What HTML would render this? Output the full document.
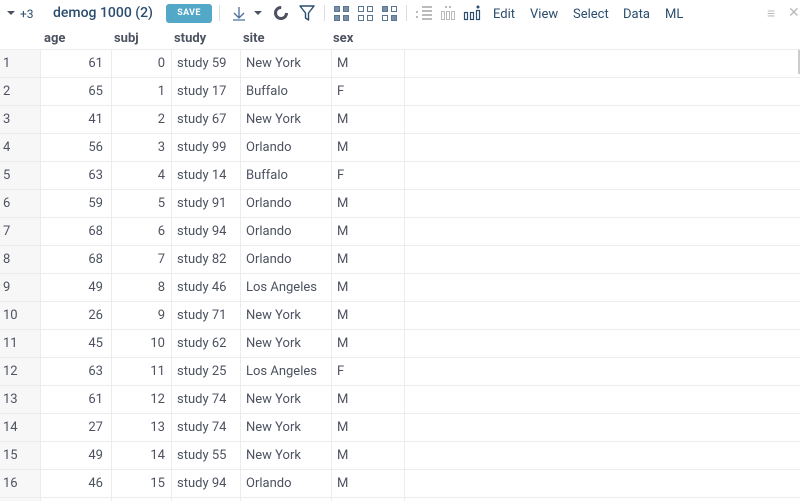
<!DOCTYPE html>
<html style="width:800px;height:501px;overflow:hidden"><head><meta charset="utf-8"><style>
*{margin:0;padding:0;box-sizing:border-box}
body{width:800px;height:501px;overflow:hidden;background:#fff;font-family:"Roboto","Liberation Sans",sans-serif;color:#4d5261;position:relative;font-size:13px}
.tb{position:absolute;top:0;left:0;width:800px;height:27px}
.t{position:absolute;top:6px;font-size:13px;color:#2a4d6e}
.save{position:absolute;left:166px;top:4px;width:46px;height:19px;background:#53a8c8;border-radius:3px;color:#fff;font-size:9px;font-weight:bold;text-align:center;line-height:19px;letter-spacing:.3px}
.sep{position:absolute;top:5px;width:1px;height:16px;background:#ddd}
.g{position:absolute;top:6px;width:16px;height:16px}
.g i{position:absolute;width:6px;height:6px;border:1px solid #5a7590}
.hdr{position:absolute;top:28px;height:22px;font-weight:bold;font-size:13px;color:#4d5261;line-height:22px}
.row{position:absolute;left:0;width:800px;height:28px;border-top:1px solid #ececec;overflow:hidden}
.c{position:absolute;top:0;height:27px;line-height:27px;border-left:1px solid #ececec;padding:0 5px;white-space:nowrap;font-size:13px}
.rn{position:absolute;left:0;top:0;width:40px;height:27px;background:#f7f7f7;line-height:27px;padding-left:3px}
</style></head><body>
<div class="tb">
<svg style="position:absolute;left:7px;top:11px" width="8" height="5"><path d="M0 0L8 0L4 4Z" fill="#4d5261"/></svg>
<span class="t" style="left:20px;font-size:12px;top:7px">+3</span>
<span class="t" style="left:53px;font-size:14px;top:5px;font-weight:500">demog 1000 (2)</span>
<div class="save">SAVE</div>
<div class="sep" style="left:219px"></div>
<svg style="position:absolute;left:232px;top:6px" width="14" height="15"><path d="M7 1V11M2 7L7 12L12 7M1 14H13" stroke="#4a6fa0" stroke-width="1.3" fill="none"/></svg>
<svg style="position:absolute;left:254px;top:11px" width="8" height="5"><path d="M0 0L8 0L4 4Z" fill="#4d5261"/></svg>
<svg style="position:absolute;left:273px;top:5px" width="16" height="16"><circle cx="8" cy="8" r="5.5" stroke="#4d5261" stroke-width="3" fill="none" stroke-dasharray="26 9"/></svg>
<svg style="position:absolute;left:299px;top:5px" width="16" height="17"><path d="M1 1H15L9.5 8V15L6.5 13V8Z" stroke="#2a4d6e" stroke-width="1.4" fill="none" stroke-linejoin="round"/></svg>
<div class="sep" style="left:324px"></div>
<div class="g" style="left:334px"><i style="left:0;top:0;background:#7a90a8"></i><i style="left:9px;top:0;background:#7a90a8"></i><i style="left:0;top:9px;background:#7a90a8"></i><i style="left:9px;top:9px;background:#7a90a8"></i></div>
<div class="g" style="left:358px"><i style="left:0;top:0"></i><i style="left:9px;top:0"></i><i style="left:0;top:9px"></i><i style="left:9px;top:9px"></i></div>
<div class="g" style="left:382px"><i style="left:0;top:0;background:#7a90a8"></i><i style="left:9px;top:0"></i><i style="left:0;top:9px"></i><i style="left:9px;top:9px;background:#7a90a8"></i></div>
<div class="sep" style="left:406px"></div>
<svg style="position:absolute;left:415px;top:5px" width="18" height="16"><g fill="#bbb"><rect x="7" y="1" width="10" height="2"/><rect x="7" y="5" width="10" height="2"/><rect x="7" y="9" width="10" height="2"/><rect x="7" y="13" width="10" height="2"/><rect x="1" y="6" width="2" height="2"/><rect x="1" y="11" width="2" height="2"/></g></svg>
<svg style="position:absolute;left:440px;top:5px" width="16" height="16"><g stroke="#bbb" fill="none"><rect x="1.5" y="6.5" width="3" height="8"/><rect x="6.5" y="6.5" width="3" height="8"/><rect x="11.5" y="6.5" width="3" height="8"/></g><g fill="#bbb"><rect x="5" y="1" width="2" height="2"/><rect x="9" y="1" width="2" height="2"/></g></svg>
<svg style="position:absolute;left:463px;top:5px" width="18" height="16"><g stroke="#2a4d6e" fill="none" stroke-width="1.2"><rect x="1.5" y="7.5" width="3" height="7"/><rect x="7.5" y="7.5" width="3" height="7"/><rect x="13.5" y="5.5" width="3" height="9"/></g><circle cx="15" cy="2" r="1.5" fill="#2a4d6e"/></svg>
<span class="t" style="left:493px;top:7px">Edit</span>
<span class="t" style="left:530px;top:7px">View</span>
<span class="t" style="left:573px;top:7px">Select</span>
<span class="t" style="left:623px;top:7px">Data</span>
<span class="t" style="left:665px;top:7px">ML</span>
<span class="t" style="left:767px;color:#bbb;font-size:14px;top:5px">≡</span>
<span class="t" style="left:788px;color:#bbb;font-size:14px;top:5px">✕</span>
</div>
<div class="hdr" style="left:44px">age</div>
<div class="hdr" style="left:114px">subj</div>
<div class="hdr" style="left:174px">study</div>
<div class="hdr" style="left:243px">site</div>
<div class="hdr" style="left:333px">sex</div>
<div style="position:absolute;left:798px;top:50px;width:2px;height:24px;background:#ccc"></div>
<div id="rows"></div>
<script>
var d=[[61,0,59,"New York","M"],[65,1,17,"Buffalo","F"],[41,2,67,"New York","M"],[56,3,99,"Orlando","M"],[63,4,14,"Buffalo","F"],[59,5,91,"Orlando","M"],[68,6,94,"Orlando","M"],[68,7,82,"Orlando","M"],[49,8,46,"Los Angeles","M"],[26,9,71,"New York","M"],[45,10,62,"New York","M"],[63,11,25,"Los Angeles","F"],[61,12,74,"New York","M"],[27,13,74,"New York","M"],[49,14,55,"New York","M"],[46,15,94,"Orlando","M"],["","","","",""]];
var h="";
d.forEach(function(r,i){
var top=49+i*28, ht=i<16?28:4;
h+='<div class="row" style="top:'+top+'px;height:'+ht+'px"><div class="rn">'+(i<16?i+1:"")+'</div>'+
'<div class="c" style="left:40px;width:71px;text-align:right;padding-right:8px">'+r[0]+'</div>'+
'<div class="c" style="left:111px;width:60px;text-align:right;padding-right:6px">'+r[1]+'</div>'+
'<div class="c" style="left:171px;width:69px">'+(r[2]!==""?"study "+r[2]:"")+'</div>'+
'<div class="c" style="left:240px;width:91px">'+r[3]+'</div>'+
'<div class="c" style="left:331px;width:73px">'+r[4]+'</div>'+
'<div class="c" style="left:404px;width:1px;padding:0"></div></div>';});
document.getElementById("rows").innerHTML=h;
</script>
</body></html>
